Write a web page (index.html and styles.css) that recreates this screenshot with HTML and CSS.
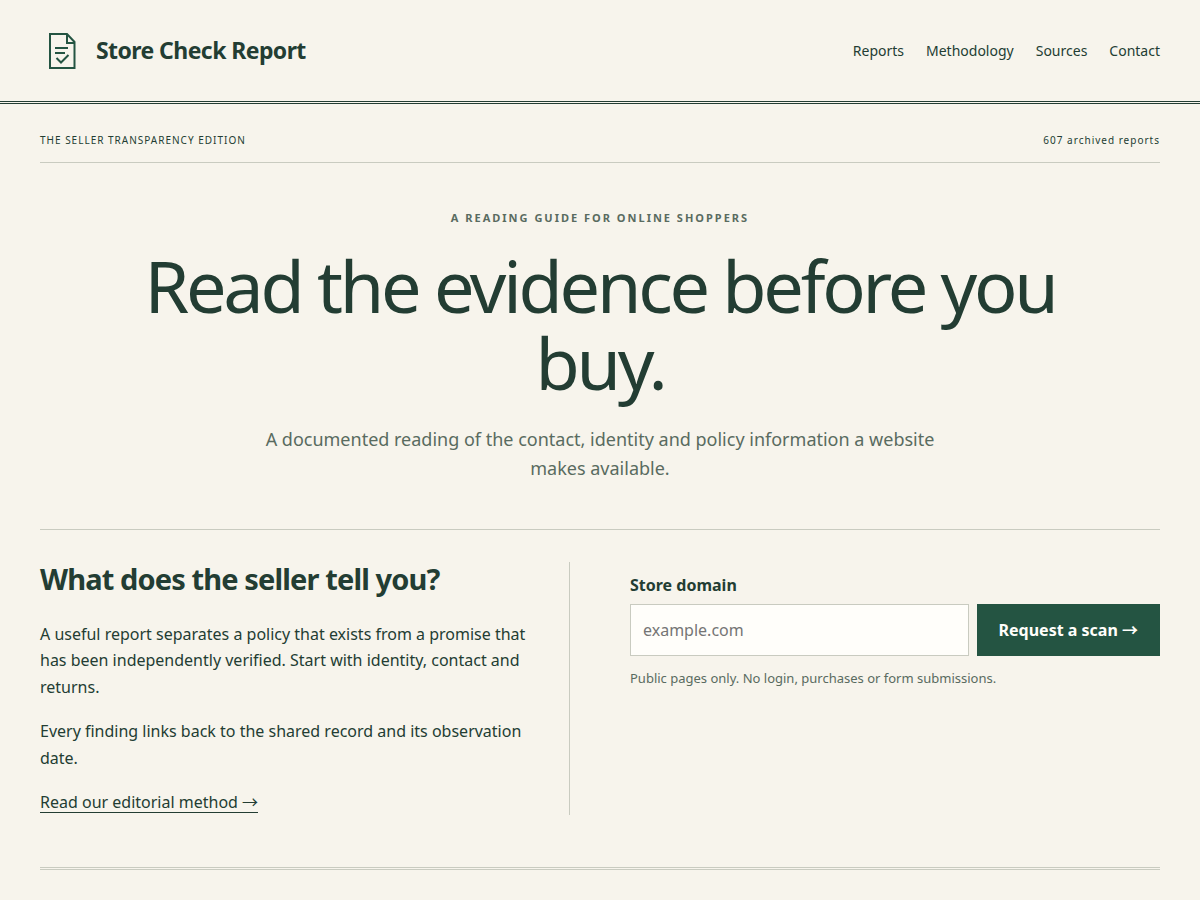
FILE: index.html
```html
<!DOCTYPE html>
<html lang="en">
<head>
  <meta charset="UTF-8" />
  <meta name="viewport" content="width=device-width,initial-scale=1.0" />
  <title>Store Check Report</title>
  <link rel="stylesheet" href="styles.css">
</head>
<body>

  <header class="site-header">
    <a class="brand" href="#">
      <svg class="brand-icon" viewBox="0 0 44 44" fill="none" stroke="currentColor" stroke-width="2" aria-hidden="true">
        <path d="M10 5h17l7.5 8v26H10z" />
        <path d="M27 5v9h7.5" />
        <path d="M15 19h13M15 24h10M16.500 29l4.500 4.500 7.500-7.500" />
      </svg>
      <span>Store Check Report</span>
    </a>
    <nav class="site-nav">
      <a href="#">Reports</a>
      <a href="#">Methodology</a>
      <a href="#">Sources</a>
      <a href="#">Contact</a>
    </nav>
  </header>

  <main class="page">
    <div class="edition">
      <span>THE SELLER TRANSPARENCY EDITION</span>
      <span>607 archived reports</span>
    </div>

    <section class="hero">
      <p class="kicker">A READING GUIDE FOR ONLINE SHOPPERS</p>
      <h1>Read the evidence before you buy.</h1>
      <p class="lead">A documented reading of the contact, identity and policy information a website makes available.</p>
    </section>

    <section class="columns">
      <div class="story">
        <h2>What does the seller tell you?</h2>
        <p>A useful report separates a policy that exists from a promise that has been independently verified. Start with identity, contact and returns.</p>
        <p>Every finding links back to the shared record and its observation date.</p>
        <a class="text-link" href="#">Read our editorial method →</a>
      </div>
      <form class="scan">
        <label for="domain">Store domain</label>
        <div class="scan-row">
          <input type="text" id="domain" name="domain" placeholder="example.com" />
          <button type="submit">Request a scan →</button>
        </div>
        <small>Public pages only. No login, purchases or form submissions.</small>
      </form>
    </section>
  </main>

</body>
</html>
```

FILE: styles.css
```css
* {
  box-sizing: border-box;
}

body {
  margin: 0;
  background: #f7f4ec;
  color: #233d33;
  font-family: "Noto Sans", "Noto Sans CJK JP", sans-serif;
  font-size: 16px;
  line-height: 1.65;
}

a {
  color: inherit;
  text-decoration: none;
}

.site-header {
  display: flex;
  align-items: center;
  justify-content: space-between;
  padding: 29px 40px 28px;
  border-bottom: 3px double #233d33;
}

.brand {
  display: flex;
  align-items: center;
  gap: 12px;
  font-size: 23px;
  font-weight: 700;
  letter-spacing: -0.025em;
}

.brand-icon {
  width: 44px;
  height: 44px;
  color: #245442;
}

.site-nav {
  display: flex;
  gap: 22px;
  font-size: 14px;
}

.page {
  max-width: 1200px;
  margin: 0 auto;
  padding: 0 40px;
}

.edition {
  display: flex;
  justify-content: space-between;
  padding: 28px 0 13px;
  border-bottom: 1px solid #c9cbc0;
  font-size: 10px;
  letter-spacing: 1px;
}

.hero {
  padding: 46px 0 45px;
  border-bottom: 1px solid #c9cbc0;
  text-align: center;
}

.kicker {
  margin: 0 0 20px;
  color: #596b60;
  font-size: 11px;
  font-weight: 700;
  letter-spacing: 2px;
}

h1 {
  max-width: 960px;
  margin: 0 auto 24px;
  font-size: 72px;
  font-weight: 400;
  line-height: 77px;
  letter-spacing: -0.045em;
}

.lead {
  max-width: 700px;
  margin: 0 auto;
  color: #596b60;
  font-size: 18px;
}

.columns {
  display: grid;
  grid-template-columns: 1fr 1fr;
  gap: 60px;
  padding: 32px 0 52px;
  border-bottom: 3px double #c9cbc0;
}

.story {
  padding-right: 40px;
  border-right: 1px solid #c9cbc0;
}

h2 {
  margin: 0 0 25px;
  font-size: 29px;
  line-height: 34px;
  letter-spacing: -0.03em;
}

.story p {
  margin: 0 0 18px;
}

.text-link {
  display: inline-block;
  border-bottom: 1px solid;
  line-height: 20px;
}

.scan {
  padding-top: 10px;
}

.scan label {
  display: block;
  margin-bottom: 6px;
  font-weight: 700;
}

.scan-row {
  display: flex;
  gap: 8px;
}

.scan input {
  flex: 1;
  min-width: 0;
  height: 52px;
  padding: 0 12px;
  border: 1px solid #c9cbc0;
  background: #fffefa;
  color: inherit;
  font: inherit;
}

.scan button {
  padding: 0 22px;
  border: 0;
  background: #245442;
  color: #fffefa;
  font: inherit;
  font-weight: 700;
  cursor: pointer;
}

.scan small {
  display: block;
  margin-top: 12px;
  color: #596b60;
  font-size: 13px;
}

@media (max-width: 800px) {
  .columns {
    grid-template-columns: 1fr;
  }

  .story {
    padding-right: 0;
    border-right: 0;
  }
}
```
